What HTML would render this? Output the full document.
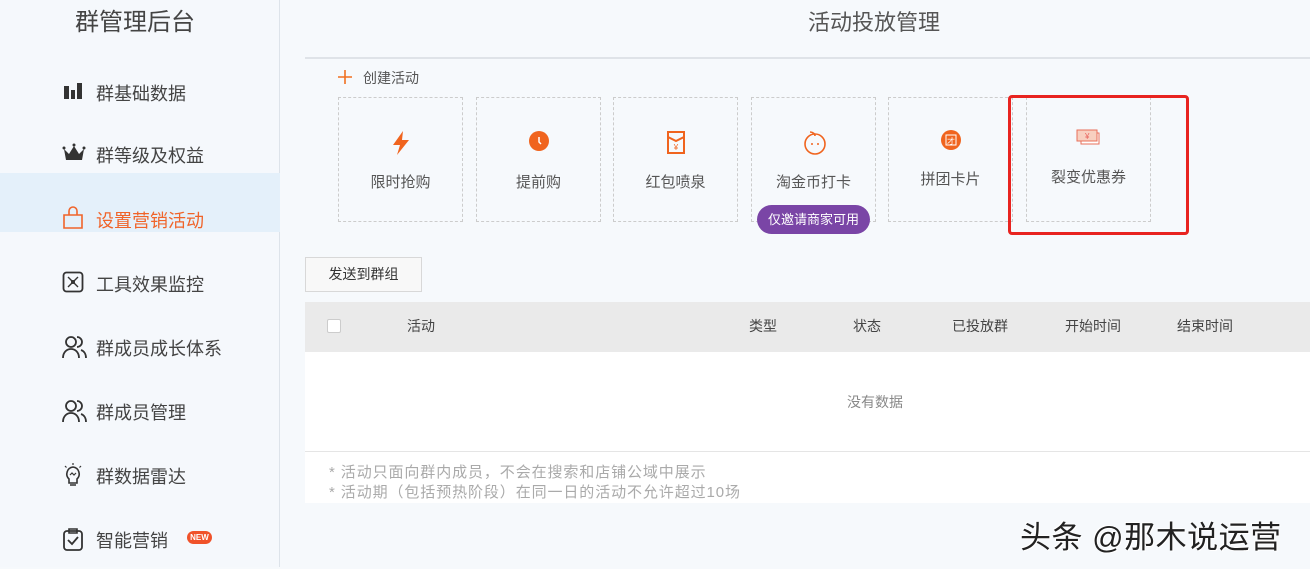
<!DOCTYPE html>
<html><head><meta charset="utf-8"><style>
*{margin:0;padding:0;box-sizing:border-box}
body{width:1310px;height:567px;background:#f6f9fc;font-family:"Liberation Sans","Noto Sans CJK SC",sans-serif;position:relative;overflow:hidden;color:#333}
.side{position:absolute;left:0;top:0;width:280px;height:567px;background:#f5f8fc;border-right:1px solid #dde3ea}
.title{position:absolute;left:75px;top:2px;font-size:24px;color:#444}
.item{position:absolute;left:0;width:280px;height:60px;font-size:18px;color:#444}
.item span{position:absolute;left:96px;top:18px}
.item svg{position:absolute;left:62px;top:18px}
.act{background:#e4f0fa;color:#f0642a}
.abs{position:absolute}
.card{position:absolute;top:97px;width:125px;height:125px;border:1px dashed #ccc;text-align:center;font-size:15px;color:#555}
.card .t{position:absolute;left:0;right:0;top:73px}
.card svg{position:absolute;left:50px;top:32px}
.th{position:absolute;top:316px;font-size:14px;color:#444}
</style></head><body>
<div class="side">
<div class="title">群管理后台</div>
<div class="item" style="top:62px"><svg width="22" height="22" viewBox="0 0 22 22"><rect x="2" y="6" width="5" height="13" fill="#333"/><rect x="9" y="10" width="4" height="9" fill="#333"/><rect x="15" y="3" width="5" height="16" fill="#333"/></svg><span>群基础数据</span></div>
<div class="item" style="top:124px"><svg width="24" height="22" viewBox="0 0 24 22"><path d="M2 7l5 5 5-8 5 8 5-5-2 11H4z" fill="#333"/><circle cx="2" cy="6" r="1.5" fill="#333"/><circle cx="12" cy="3" r="1.5" fill="#333"/><circle cx="22" cy="6" r="1.5" fill="#333"/></svg><span>群等级及权益</span></div>
<div class="item act" style="top:173px;height:59px"><svg width="22" height="24" viewBox="0 0 22 24" style="top:33px"><path d="M2 9h18v13H2z M7 9V5a4 4 0 018 0v4" fill="none" stroke="#f0642a" stroke-width="1.6"/></svg><span style="top:34px">设置营销活动</span></div>
<div class="item" style="top:253px"><svg width="22" height="22" viewBox="0 0 22 22"><rect x="1.5" y="1.5" width="19" height="19" rx="3" fill="none" stroke="#333" stroke-width="1.8"/><path d="M6 6l10 10M16 6L6 16" stroke="#333" stroke-width="1.4"/><circle cx="11" cy="11" r="2" fill="#333"/></svg><span>工具效果监控</span></div>
<div class="item" style="top:317px"><svg width="26" height="24" viewBox="0 0 26 24"><circle cx="9" cy="7" r="5" fill="none" stroke="#333" stroke-width="1.8"/><path d="M1 23c0-6 4-9 8-9s8 3 8 9M15 2a5 5 0 010 10M19 15c3 1 5 4 5 8" fill="none" stroke="#333" stroke-width="1.8"/></svg><span>群成员成长体系</span></div>
<div class="item" style="top:381px"><svg width="26" height="24" viewBox="0 0 26 24"><circle cx="9" cy="7" r="5" fill="none" stroke="#333" stroke-width="1.8"/><path d="M1 23c0-6 4-9 8-9s8 3 8 9M15 2a5 5 0 010 10M19 15c3 1 5 4 5 8" fill="none" stroke="#333" stroke-width="1.8"/></svg><span>群成员管理</span></div>
<div class="item" style="top:445px"><svg width="22" height="24" viewBox="0 0 22 24"><path d="M11 4a7 7 0 00-4 12v4h8v-4a7 7 0 00-4-12zM8 22h6" fill="none" stroke="#333" stroke-width="1.6"/><path d="M8 12l2-2 2 2 2-2" fill="none" stroke="#333" stroke-width="1.2"/><path d="M3 3l1.5 1.5M19 3l-1.5 1.5M11 0v2" stroke="#333" stroke-width="1.2"/></svg><span>群数据雷达</span></div>
<div class="item" style="top:509px"><svg width="22" height="24" viewBox="0 0 22 24"><rect x="2" y="4" width="18" height="19" rx="3" fill="none" stroke="#333" stroke-width="1.8"/><path d="M7 2h8v4H7z" fill="none" stroke="#333" stroke-width="1.6"/><path d="M6 13l4 4 6-7" fill="none" stroke="#333" stroke-width="1.8"/></svg><span>智能营销</span><div class="abs" style="left:187px;top:22px;width:25px;height:13px;border-radius:7px;background:#f0522a;color:#fff;font-size:8px;font-weight:bold;text-align:center;line-height:13px">NEW</div></div>
</div>

<div class="abs" style="left:808px;top:5px;font-size:22px;color:#555">活动投放管理</div>
<div class="abs" style="left:305px;top:57px;width:1005px;height:2px;background:#dfe3e8"></div>
<svg class="abs" style="left:337px;top:69px" width="16" height="16" viewBox="0 0 16 16"><path d="M8 1v14M1 8h14" stroke="#f07020" stroke-width="1.6"/></svg>
<div class="abs" style="left:363px;top:68px;font-size:14px;color:#555">创建活动</div>

<div class="card" style="left:338px"><svg width="24" height="26" viewBox="0 0 24 26"><path d="M14 1L4 15h7l-3 10 12-15h-7z" fill="#f0641e"/></svg><div class="t">限时抢购</div></div>
<div class="card" style="left:476px"><svg width="24" height="26" viewBox="0 0 24 26"><circle cx="12" cy="11" r="10" fill="#f0641e"/><path d="M12 7v5l2 2" stroke="#fff" stroke-width="1.5" fill="none"/></svg><div class="t">提前购</div></div>
<div class="card" style="left:613px"><svg width="24" height="26" viewBox="0 0 24 26"><rect x="4" y="2" width="16" height="21" fill="none" stroke="#f0641e" stroke-width="2"/><path d="M4 7l8 4 8-4" fill="none" stroke="#f0641e" stroke-width="2"/><text x="12" y="20" font-size="8" text-anchor="middle" fill="#f0641e">¥</text></svg><div class="t">红包喷泉</div></div>
<div class="card" style="left:751px"><svg width="26" height="26" viewBox="0 0 26 26"><circle cx="13" cy="14" r="10" fill="none" stroke="#f0641e" stroke-width="1.6"/><path d="M8 2c3 0 5 2 5 4" fill="none" stroke="#f0641e" stroke-width="1.6"/><circle cx="10" cy="14" r="1" fill="#f0641e"/><circle cx="16" cy="14" r="1" fill="#f0641e"/></svg><div class="t">淘金币打卡</div></div>
<div class="abs" style="left:757px;top:205px;width:113px;height:29px;border-radius:15px;background:#7a45a6;color:#fff;font-size:13px;text-align:center;line-height:29px">仅邀请商家可用</div>
<div class="card" style="left:888px"><svg width="24" height="26" viewBox="0 0 24 26" style="top:30px"><circle cx="12" cy="12" r="10" fill="#f0641e"/><rect x="7" y="7" width="10" height="10" fill="none" stroke="#fff" stroke-width="1"/><text x="12" y="16" font-size="8" text-anchor="middle" fill="#fff">才</text></svg><div class="t" style="top:70px">拼团卡片</div></div>
<div class="card" style="left:1026px"><svg width="28" height="22" viewBox="0 0 28 22" style="top:30px;left:48px"><rect x="6" y="5" width="18" height="11" fill="#fff" stroke="#e8705a"/><rect x="2" y="2" width="20" height="11" fill="#f8d0c0" stroke="#e8705a"/><text x="10" y="11" font-size="8" fill="#e8605a">¥</text></svg><div class="t" style="top:68px">裂变优惠券</div></div>
<div class="abs" style="left:1008px;top:95px;width:181px;height:140px;border:3px solid #e82420;border-radius:4px"></div>

<div class="abs" style="left:305px;top:257px;width:117px;height:35px;border:1px solid #d8d8d8;background:#f8f8f8;font-size:14px;color:#333;text-align:center;line-height:33px">发送到群组</div>
<div class="abs" style="left:305px;top:302px;width:1005px;height:50px;background:#eaeaea"></div>
<div class="abs" style="left:327px;top:319px;width:14px;height:14px;background:#fff;border:1px solid #ccc;border-radius:2px"></div>
<div class="th" style="left:407px">活动</div><div class="th" style="left:749px">类型</div><div class="th" style="left:853px">状态</div><div class="th" style="left:952px">已投放群</div><div class="th" style="left:1065px">开始时间</div><div class="th" style="left:1177px">结束时间</div>
<div class="abs" style="left:305px;top:352px;width:1005px;height:151px;background:#fff"></div>
<div class="abs" style="left:305px;top:451px;width:1005px;height:1px;background:#e5e5e5"></div>
<div class="abs" style="left:847px;top:392px;font-size:14px;color:#888">没有数据</div>
<div class="abs" style="left:329px;top:463px;font-size:15px;color:#aaa;line-height:20px;letter-spacing:0.9px;white-space:nowrap">* 活动只面向群内成员，不会在搜索和店铺公域中展示<br>* 活动期（包括预热阶段）在同一日的活动不允许超过10场</div>
<div class="abs" style="left:1020px;top:512px;font-size:31px;color:#222;letter-spacing:0.5px;white-space:nowrap;text-shadow:1px 1px 0 #fff,-1px -1px 0 #fff">头条 @那木说运营</div>
</body></html>
